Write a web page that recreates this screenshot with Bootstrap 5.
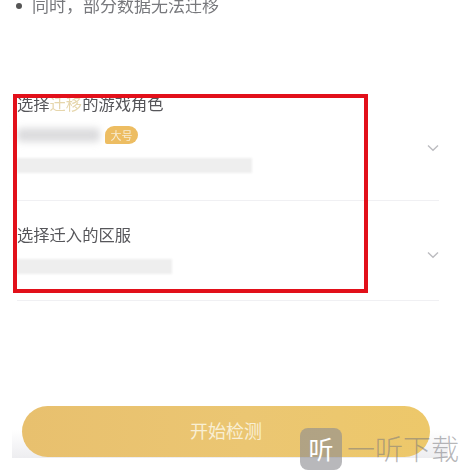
<!DOCTYPE html>
<html lang="zh-CN">
<head>
<meta charset="utf-8">
<title>迁移</title>
<link href="https://cdn.jsdelivr.net/npm/bootstrap@5.3.0/dist/css/bootstrap.min.css" rel="stylesheet">
<style>
html,body{height:100%;}
body{background:#fff;font-family:"Noto Sans CJK SC","Liberation Sans",sans-serif;overflow:hidden;}
.stage{position:relative;width:460px;height:470px;overflow:hidden;padding:0 21px 0 17px;}
.note-line{height:14px;margin-top:-6px;font-size:17px;line-height:22px;color:#77787c;padding-left:15px;position:relative;white-space:nowrap;filter:blur(.4px);}
.note-line::before{content:"";position:absolute;left:-1px;top:9px;width:6px;height:6px;border-radius:50%;background:#555;}
.cjk-comma{font-family:"Noto Sans CJK TC",sans-serif;}
.pick-block{display:flex;align-items:flex-start;justify-content:space-between;border-bottom:1px solid #f0f0f3;}
.pick-role{margin-top:79px;height:114px;}
.pick-zone{height:100px;}
.pick-body{flex:1 1 auto;}
.pick-title{font-size:16.3px;line-height:22px;color:#56565a;white-space:nowrap;filter:blur(.3px);}
.pick-role .pick-title{padding-top:5px;box-sizing:content-box;}
.pick-zone .pick-title{padding-top:22px;}
.hl{color:#e6d6ac;}
.role-row{display:flex;align-items:center;margin-top:11px;height:20px;}
.smudge-name{width:83px;height:14px;border-radius:4px;background:#dcdcde;filter:blur(3.5px);margin-right:5px;}
.tag-big{width:33px;height:18px;background:#edbd62;border-radius:9px 9px 9px 2px;color:#f8ecd2;font-size:11px;line-height:18px;text-align:center;filter:blur(.4px);}
.smudge-line{height:15px;background:#eeeeee;filter:blur(1px);}
.smudge-w1{width:235px;margin-top:13px;}
.smudge-w2{width:155px;margin-top:14px;}
.chev{flex:0 0 auto;width:12px;height:8px;color:#bcbcc0;}
.pick-role .chev{margin-top:57px;}
.pick-zone .chev{margin-top:50px;}
.go-area{position:absolute;left:22px;top:406px;width:408px;height:51px;}
.go-btn{width:100%;height:100%;border:0;border-radius:26px;background:linear-gradient(90deg,#e8c06e,#ebc672 55%,#edc86a);color:#f9efd4;font-size:18px;padding:0 0 3px;}
.shade-strip{position:absolute;left:12px;top:430px;width:436px;height:28px;background:linear-gradient(180deg,#fff,#ededf0);}
.wm-logo{position:absolute;left:300px;top:428px;width:42px;height:42px;border-radius:8px;background:rgba(140,140,145,.62);color:#fff;font-size:25px;line-height:40px;text-align:center;}
.wm-text{position:absolute;left:347px;top:428px;font-size:28px;font-weight:300;line-height:40px;color:rgba(120,120,125,.55);white-space:nowrap;}
.mark-box{position:absolute;left:13px;top:94px;width:355px;height:199px;border:4px solid #e2101a;pointer-events:none;}
</style>
</head>
<body>
<div class="stage">
  <div class="note-line">同时<span class="cjk-comma">，</span>部分数据无法迁移</div>

  <div class="pick-block pick-role">
    <div class="pick-body">
      <div class="pick-title">选择<span class="hl">迁移</span>的游戏角色</div>
      <div class="role-row"><div class="smudge-name"></div><div class="tag-big">大号</div></div>
      <div class="smudge-line smudge-w1"></div>
    </div>
    <svg class="chev" viewBox="0 0 12 8" fill="none" stroke="currentColor" stroke-width="1.4"><path d="M1 1.5 6 6.2 11 1.5"/></svg>
  </div>

  <div class="pick-block pick-zone">
    <div class="pick-body">
      <div class="pick-title">选择迁入的区服</div>
      <div class="smudge-line smudge-w2"></div>
    </div>
    <svg class="chev" viewBox="0 0 12 8" fill="none" stroke="currentColor" stroke-width="1.4"><path d="M1 1.5 6 6.2 11 1.5"/></svg>
  </div>

  <div class="shade-strip"></div>
  <div class="go-area"><button type="button" class="btn go-btn">开始检测</button></div>
  <div class="wm-logo">听</div>
  <div class="wm-text">一听下载</div>
  <div class="mark-box"></div>
</div>
<script src="https://cdn.jsdelivr.net/npm/bootstrap@5.3.0/dist/js/bootstrap.bundle.min.js"></script>
</body>
</html>
